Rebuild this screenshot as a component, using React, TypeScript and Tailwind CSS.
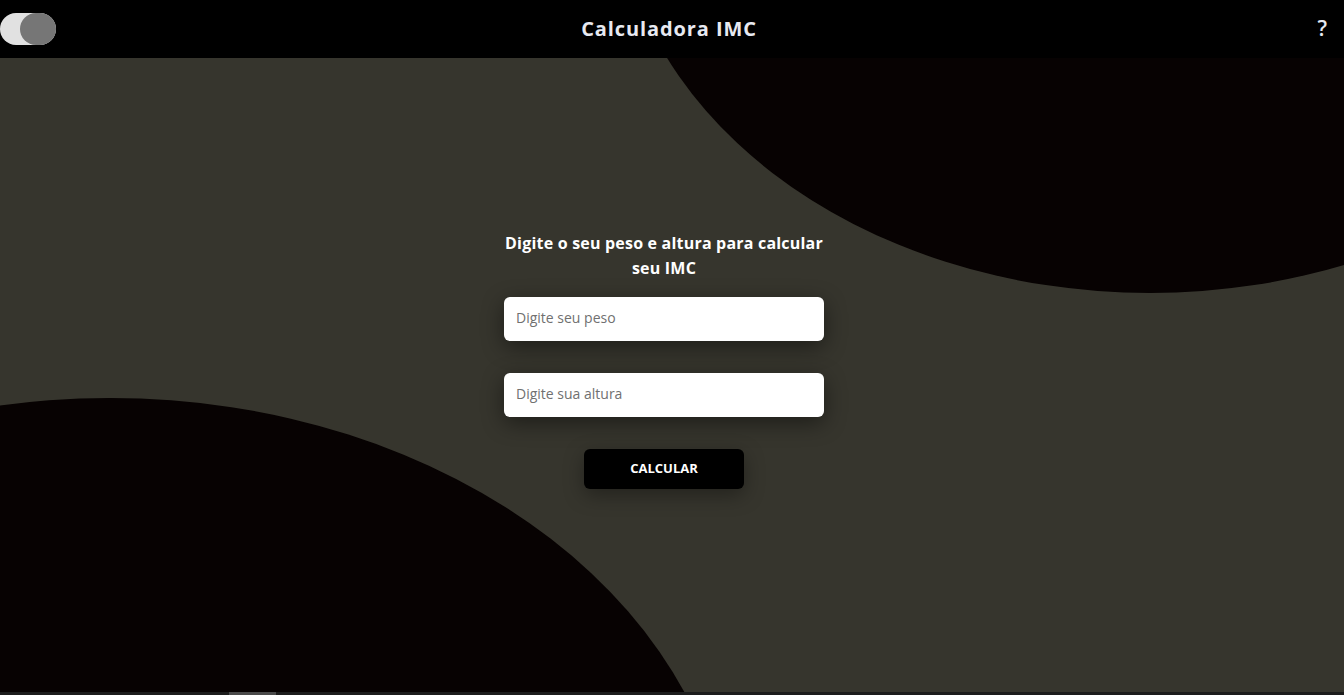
import React from 'react';

// Two decorative ellipses sit behind the form
export default function App() {
  return (
    <div className="h-[695px] w-full flex flex-col bg-black overflow-hidden" style={{ fontFamily: '"Open Sans", "Noto Sans", sans-serif' }}>
      {/* Header */}
      <header className="h-[58px] shrink-0 flex items-center justify-between bg-black">
        <div className="w-[56px] h-8 flex items-center">
          <div className="relative w-[56px] h-8 rounded-full bg-[#e1e1e1]">
            <div className="absolute right-0 top-0 w-9 h-8 rounded-full bg-[#767676]" />
          </div>
        </div>
        <h1 className="text-[20px] font-bold text-[#e7e9f1] tracking-[0.9px] pr-1.5">Calculadora IMC</h1>
        <button className="w-[56px] text-right pr-[17px] pb-0.5 text-[21px] font-semibold text-[#e7e9f1] leading-none">?</button>
      </header>

      {/* Main */}
      <main className="relative flex-1 bg-[#36352d] overflow-hidden">
        <div className="absolute left-[616px] top-[-585px] w-[1068px] h-[820px] rounded-[50%] bg-[#070202]" />
        <div className="absolute left-[-513px] top-[340px] w-[1246px] h-[960px] rounded-[50%] bg-[#070202]" />

        <div className="relative flex justify-center pr-4 pt-[173px]">
          <div className="w-[320px] flex flex-col items-center">
            <p className="text-[16px] leading-[25px] font-bold text-white text-center tracking-[0.2px] whitespace-nowrap">
              Digite o seu peso e altura para calcular
              <br />
              seu IMC
            </p>
            <input
              type="text"
              placeholder="Digite seu peso"
              className="mt-4 w-full h-11 rounded-md bg-white px-3 pb-1 text-[14px] text-[#333] placeholder:text-[#707070] outline-none shadow-[0_6px_22px_rgba(0,0,0,0.45)]"
            />
            <input
              type="text"
              placeholder="Digite sua altura"
              className="mt-8 w-full h-11 rounded-md bg-white px-3 pb-1 text-[14px] text-[#333] placeholder:text-[#707070] outline-none shadow-[0_6px_22px_rgba(0,0,0,0.45)]"
            />
            <button className="mt-8 w-40 h-10 rounded-md bg-black text-white text-[13px] font-bold shadow-[0_6px_20px_rgba(0,0,0,0.35)]">
              CALCULAR
            </button>
          </div>
        </div>
      </main>

      {/* Scrollbar strip */}
      <div className="h-[3px] shrink-0 bg-[#1c1c1c] flex">
        <div className="ml-[229px] w-[47px] bg-[#4a4a4a]" />
      </div>
    </div>
  );
}
